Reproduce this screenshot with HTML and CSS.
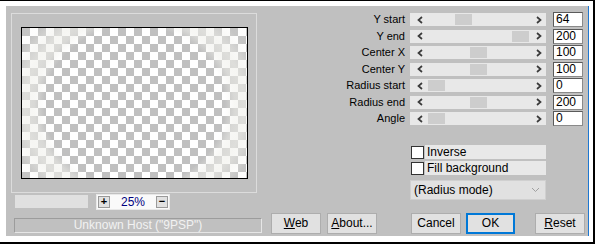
FILE: index.html
```html
<!DOCTYPE html>
<html>
<head>
<meta charset="utf-8">
<link rel="stylesheet" href="styles.css">
</head>
<body>
<div class="window">
  <div class="panel">
    <div class="left">
      <div class="group">
        <div class="preview"><div class="ring"></div></div>
      </div>
      <div class="zoomrow">
        <div class="zbar"></div>
        <div class="zbox">
          <span class="zbtn">+</span>
          <span class="zval">25%</span>
          <span class="zbtn">&minus;</span>
        </div>
      </div>
      <div class="host">Unknown Host ("9PSP")</div>
    </div>
    <div class="right">
      <div class="params">
        <span class="lbl">Y start</span>
        <div class="sb"><svg class="arr" width="6" height="8" viewBox="0 0 6 8"><polyline points="5,1 1.5,4 5,7"/></svg><div class="track"><div class="thumb" style="left:28px"></div></div><svg class="arr" width="6" height="8" viewBox="0 0 6 8"><polyline points="1,1 4.5,4 1,7"/></svg></div>
        <div class="num">64</div>

        <span class="lbl">Y end</span>
        <div class="sb"><svg class="arr" width="6" height="8" viewBox="0 0 6 8"><polyline points="5,1 1.5,4 5,7"/></svg><div class="track"><div class="thumb" style="left:85px"></div></div><svg class="arr" width="6" height="8" viewBox="0 0 6 8"><polyline points="1,1 4.5,4 1,7"/></svg></div>
        <div class="num">200</div>

        <span class="lbl">Center X</span>
        <div class="sb"><svg class="arr" width="6" height="8" viewBox="0 0 6 8"><polyline points="5,1 1.5,4 5,7"/></svg><div class="track"><div class="thumb" style="left:43px"></div></div><svg class="arr" width="6" height="8" viewBox="0 0 6 8"><polyline points="1,1 4.5,4 1,7"/></svg></div>
        <div class="num">100</div>

        <span class="lbl">Center Y</span>
        <div class="sb"><svg class="arr" width="6" height="8" viewBox="0 0 6 8"><polyline points="5,1 1.5,4 5,7"/></svg><div class="track"><div class="thumb" style="left:43px"></div></div><svg class="arr" width="6" height="8" viewBox="0 0 6 8"><polyline points="1,1 4.5,4 1,7"/></svg></div>
        <div class="num">100</div>

        <span class="lbl">Radius start</span>
        <div class="sb"><svg class="arr" width="6" height="8" viewBox="0 0 6 8"><polyline points="5,1 1.5,4 5,7"/></svg><div class="track"><div class="thumb" style="left:1px"></div></div><svg class="arr" width="6" height="8" viewBox="0 0 6 8"><polyline points="1,1 4.5,4 1,7"/></svg></div>
        <div class="num">0</div>

        <span class="lbl">Radius end</span>
        <div class="sb"><svg class="arr" width="6" height="8" viewBox="0 0 6 8"><polyline points="5,1 1.5,4 5,7"/></svg><div class="track"><div class="thumb" style="left:43px"></div></div><svg class="arr" width="6" height="8" viewBox="0 0 6 8"><polyline points="1,1 4.5,4 1,7"/></svg></div>
        <div class="num">200</div>

        <span class="lbl">Angle</span>
        <div class="sb"><svg class="arr" width="6" height="8" viewBox="0 0 6 8"><polyline points="5,1 1.5,4 5,7"/></svg><div class="track"><div class="thumb" style="left:1px"></div></div><svg class="arr" width="6" height="8" viewBox="0 0 6 8"><polyline points="1,1 4.5,4 1,7"/></svg></div>
        <div class="num">0</div>
      </div>

      <div class="checks">
        <div class="chk"><span class="box"></span><span class="chklbl">Inverse</span></div>
        <div class="chk"><span class="box"></span><span class="chklbl">Fill background</span></div>
      </div>

      <div class="select">
        <span>(Radius mode)</span>
        <svg class="chev" width="9" height="6" viewBox="0 0 9 6"><polyline points="1,1 4.5,4.5 8,1"/></svg>
      </div>

      <div class="buttons">
        <div class="btn w-web"><u>W</u>eb</div>
        <div class="btn w-about"><u>A</u>bout...</div>
        <div class="btn w-cancel">Cancel</div>
        <div class="btn w-ok default">OK</div>
        <div class="btn w-reset"><u>R</u>eset</div>
      </div>
    </div>
  </div>
</div>
</body>
</html>
```
FILE: styles.css
```css
* { box-sizing: border-box; }
html, body { margin: 0; padding: 0; background: #ffffff; }
body {
  font-family: "Liberation Sans", Arial, sans-serif;
  font-size: 11px;
  color: #000;
}
.window {
  width: 595px;
  height: 244px;
  background: #ffffff;
  border-top: 1px solid #000;
  border-right: 2px solid #000;
  border-bottom: 2px solid #000;
  padding: 5px 4px 6px 6px;
}
.panel {
  width: 583px;
  height: 230px;
  background: #c0c0c0;
  border-right: 1px solid #1e78d2;
  display: flex;
  padding-left: 5px;
  gap: 2px;
}
.left {
  width: 252px;
  display: flex;
  flex-direction: column;
  padding-top: 7px;
}
.group {
  width: 246px;
  height: 180px;
  border: 1px solid #dcdcdc;
  padding: 13px 0 0 9px;
}
.preview {
  width: 227px;
  height: 152px;
  border: 1px solid #000;
  background-color: #fff;
  background-image: conic-gradient(#fff 0 25%, #c0c0c0 0 50%, #fff 0 75%, #c0c0c0 0);
  background-size: 16px 16px;
  overflow: hidden;
}
.ring {
  width: 100%;
  height: 100%;
  background: radial-gradient(ellipse 122px 108px at 50% 52%,
    rgba(240,240,235,0) 0,
    rgba(240,240,235,0) 74%,
    rgba(240,240,235,0.5) 82%,
    rgba(240,240,235,0.62) 90%,
    rgba(240,240,235,0.4) 98%,
    rgba(240,240,235,0.1) 106%);
}
.zoomrow {
  display: flex;
  align-items: flex-start;
  margin-top: 1px;
  height: 16px;
}
.zbar {
  width: 73px;
  height: 13px;
  margin: 1px 0 0 4px;
  background: #e0e0e0;
}
.zbox {
  width: 74px;
  height: 16px;
  margin-left: 8px;
  background: #fafafa;
  border: 1px solid #e8e8e8;
  display: flex;
  align-items: center;
  justify-content: space-between;
  padding: 0 1px 0 1px;
}
.zbtn {
  width: 12px;
  height: 12px;
  background: #e1e1e1;
  border: 1px solid #9a9a9a;
  font-size: 11px;
  font-weight: bold;
  line-height: 9px;
  text-align: center;
}
.zval {
  color: #000080;
  font-size: 12px;
  line-height: 14px;
}
.host {
  width: 248px;
  height: 15px;
  margin: 8px 0 0 3px;
  border: 1px solid #e6e6e6;
  border-left-color: #9c9c9c;
  border-top-color: #9c9c9c;
  color: #f2f2f2;
  text-align: center;
  line-height: 13px;
  font-size: 12px;
}
.right {
  width: 323px;
  display: flex;
  flex-direction: column;
  padding-top: 6px;
}
.params {
  display: grid;
  grid-template-columns: 140px 137px 30px;
  column-gap: 5px;
  grid-auto-rows: 15px;
  row-gap: 1.5px;
}
.params .sb { margin-right: 1px; }
.lbl {
  text-align: right;
  line-height: 15px;
  white-space: nowrap;
}
.sb {
  height: 13px;
  margin-top: 1px;
  background: #e8e8e8;
  display: flex;
  align-items: center;
  padding: 0 4px 0 7px;
}
.arr {
  flex: none;
  fill: none;
  stroke: #3a3a3a;
  stroke-width: 1.7;
}
.track {
  position: relative;
  flex: 1;
  height: 13px;
  margin: 0 7px 0 4px;
}
.thumb {
  position: absolute;
  top: 1px;
  width: 17px;
  height: 11px;
  background: #cdcdcd;
}
.num {
  height: 15px;
  width: 30px;
  margin-left: 1px;
  background: #fff;
  border: 1px solid #5a5a5a;
  border-right-color: #8a8a8a;
  border-bottom-color: #8a8a8a;
  padding-left: 2px;
  line-height: 13px;
  font-size: 12px;
}
.checks {
  margin: 19px 0 0 146px;
  display: flex;
  flex-direction: column;
  gap: 2px;
  width: 135px;
}
.chk {
  display: flex;
  height: 14px;
  align-items: center;
}
.box {
  width: 13px;
  height: 13px;
  background: #fff;
  border: 1px solid #333;
  flex: none;
}
.chklbl {
  flex: 1;
  height: 14px;
  margin-left: 1px;
  background: #e8e8e8;
  padding-left: 2px;
  line-height: 14px;
  font-size: 12px;
}
.select {
  margin: 5px 0 0 145px;
  width: 136px;
  height: 20px;
  background: #e1e1e1;
  border: 1px solid #d0d0d0;
  display: flex;
  align-items: center;
  justify-content: space-between;
  padding: 0 5px 0 3px;
  font-size: 12px;
}
.chev {
  fill: none;
  stroke: #a0a0a0;
  stroke-width: 1;
}
.buttons {
  display: flex;
  margin: 13px 0 0 6px;
}
.btn {
  height: 21px;
  background: #e1e1e1;
  border: 1px solid #adadad;
  text-align: center;
  line-height: 19px;
  font-size: 12px;
}
.btn u { text-decoration: underline; }
.w-web { width: 50px; }
.w-about { width: 50px; margin-left: 6px; }
.w-cancel { width: 50px; margin-left: 34px; }
.w-ok { width: 49px; margin-left: 5px; }
.w-reset { width: 50px; margin-left: 20px; }
.default {
  border: 2px solid #0078d7;
  line-height: 17px;
}
```
